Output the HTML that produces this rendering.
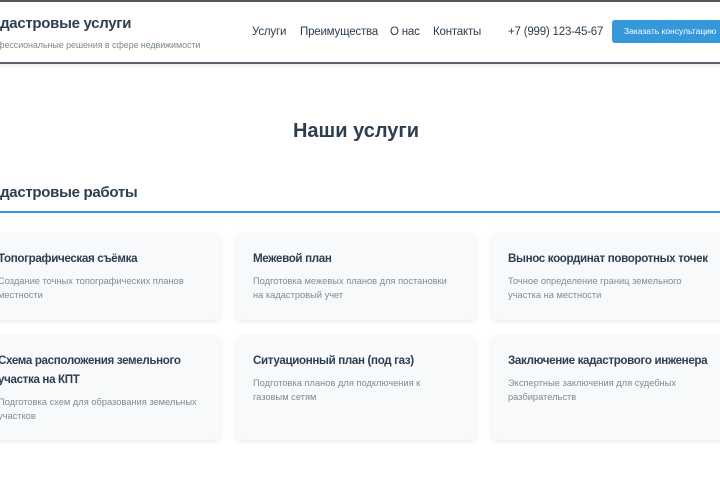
<!DOCTYPE html>
<html><head><meta charset="utf-8"><style>
*{margin:0;padding:0;box-sizing:border-box}
body{width:720px;height:480px;overflow:hidden;background:#fff;font-family:"Liberation Sans",sans-serif;color:#2c3e50;position:relative}
header{position:absolute;left:0;top:0;width:720px;height:64px;border-top:2px solid #555;border-bottom:2px solid #5a6470;background:#fff;box-shadow:0 2px 4px rgba(0,0,0,.08)}
.logo{position:absolute;left:-17px;top:13px;font-size:15px;font-weight:bold;color:#2c3e50;letter-spacing:-0.3px}
.sub{position:absolute;left:-19px;top:38px;font-size:9px;color:#7f8c8d;letter-spacing:-0.1px}
nav{position:absolute;top:24px;left:252px;font-size:11.5px;color:#2c3e50}
nav span{position:absolute;white-space:nowrap;letter-spacing:-0.2px}
.btn{position:absolute;left:612px;top:18px;width:120px;height:23px;background:#3498db;border-radius:3px;color:#fff;font-size:8.5px;line-height:23px;padding-left:12px;white-space:nowrap}
h2{position:absolute;top:120px;left:0;width:712px;text-align:center;font-size:20px}
h3{position:absolute;top:184px;left:-17px;font-size:15px;letter-spacing:-0.3px}
.line{position:absolute;top:211px;left:0;width:720px;height:2px;background:#3498db}
.card{position:absolute;width:240px;background:#f8f9fa;border-radius:7px;box-shadow:0 2px 6px rgba(0,0,0,.08);padding:16px 17px}
.card b{display:block;font-size:11.6px;line-height:19px;color:#2c3e50;white-space:nowrap;letter-spacing:-0.35px}
.card p{font-size:9.3px;line-height:14px;color:#7f8c8d;margin-top:6px;white-space:nowrap}
</style></head><body>
<header>
<div class="logo">Кадастровые услуги</div>
<div class="sub">Профессиональные решения в сфере недвижимости</div>
<nav><span style="left:0">Услуги</span><span style="left:48px">Преимущества</span><span style="left:138px">О нас</span><span style="left:181px">Контакты</span><span style="left:256px">+7 (999) 123-45-67</span></nav>
<div class="btn">Заказать консультацию</div>
</header>
<h2>Наши услуги</h2>
<h3>Кадастровые работы</h3>
<div class="line"></div>
<div class="card" style="left:-19px;top:233px;height:87px"><b>Топографическая съёмка</b><p>Создание точных топографических планов<br>местности</p></div>
<div class="card" style="left:236px;top:233px;height:87px"><b>Межевой план</b><p>Подготовка межевых планов для постановки<br>на кадастровый учет</p></div>
<div class="card" style="left:491px;top:233px;height:87px"><b>Вынос координат поворотных точек</b><p>Точное определение границ земельного<br>участка на местности</p></div>
<div class="card" style="left:-19px;top:335px;height:105px"><b>Схема расположения земельного<br>участка на КПТ</b><p>Подготовка схем для образования земельных<br>участков</p></div>
<div class="card" style="left:236px;top:335px;height:105px"><b>Ситуационный план (под газ)</b><p>Подготовка планов для подключения к<br>газовым сетям</p></div>
<div class="card" style="left:491px;top:335px;height:105px"><b>Заключение кадастрового инженера</b><p>Экспертные заключения для судебных<br>разбирательств</p></div>
</body></html>
